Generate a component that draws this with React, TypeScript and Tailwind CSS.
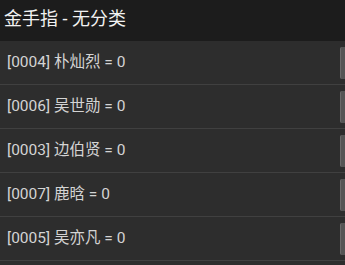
const cheats = [
  { id: "0004", name: "朴灿烈", value: 0 },
  { id: "0006", name: "吴世勋", value: 0 },
  { id: "0003", name: "边伯贤", value: 0 },
  { id: "0007", name: "鹿晗", value: 0 },
  { id: "0005", name: "吴亦凡", value: 0 },
];

function CheatRow({ id, name, value }: { id: string; name: string; value: number }) {
  return (
    <div className="flex h-[44px] items-center border-b border-[#404040] bg-[#2d2d2d]">
      <span className="flex-1 pl-[7px] text-[15.5px] text-[#d4d4d4]">
        [{id}] {name} = {value}
      </span>
      <div className="h-[32px] w-[5px] rounded-l-[2px] border-l border-[#6a6a6a] bg-[#555555]" />
    </div>
  );
}

export default function App() {
  return (
    <div
      className="h-[265px] w-[345px] overflow-hidden bg-[#2d2d2d]"
      style={{ fontFamily: 'Roboto, "Noto Sans CJK SC", sans-serif' }}
    >
      <div className="flex h-[41px] items-center bg-[#1c1c1c] pl-[4px] pb-[5px]">
        <span className="text-[18px] text-[#f2f2f2]">金手指 - 无分类</span>
      </div>
      <div className="flex flex-col">
        {cheats.map((c) => (
          <CheatRow key={c.id} {...c} />
        ))}
      </div>
    </div>
  );
}
